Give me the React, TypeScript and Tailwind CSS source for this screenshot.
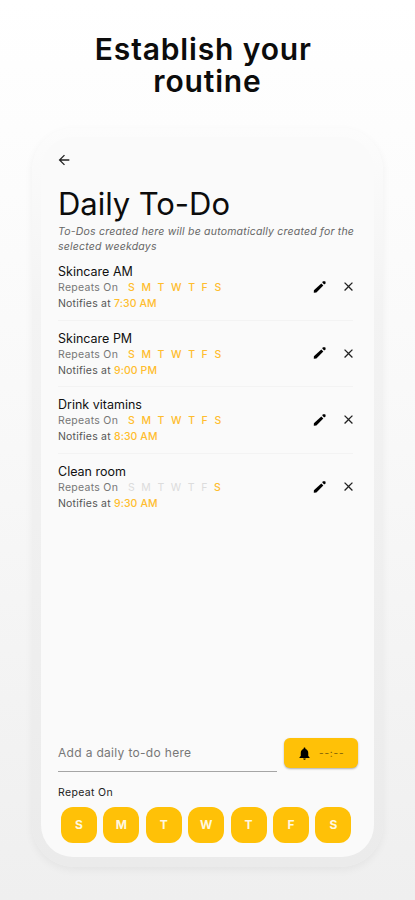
import { MdArrowBack, MdClose, MdNotifications } from 'react-icons/md';

const WEEKDAYS = ['S', 'M', 'T', 'W', 'T', 'F', 'S'];
const EVERY_DAY = [0, 1, 2, 3, 4, 5, 6];

interface Todo {
  title: string;
  time: string;
  days: number[];
}

const TODOS: Todo[] = [
  { title: 'Skincare AM', time: '7:30 AM', days: EVERY_DAY },
  { title: 'Skincare PM', time: '9:00 PM', days: EVERY_DAY },
  { title: 'Drink vitamins', time: '8:30 AM', days: EVERY_DAY },
  { title: 'Clean room', time: '9:30 AM', days: [6] },
];

function PencilIcon() {
  return (
    <svg width="14" height="14" viewBox="0 0 14 14" fill="black">
      <path d="M.8 12.8.9 10.3 8.3 3.4 10.3 5.4 3.4 12.6Z" />
      <path d="M9.2 2.6 10.5 1.3Q11 .9 11.5 1.3L12.5 2.3Q12.9 2.8 12.5 3.3L11.2 4.6Z" />
    </svg>
  );
}

function TodoRow({ todo, last }: { todo: Todo; last: boolean }) {
  return (
    <li className={`flex h-[66.6px] w-[295px] items-center border-b pt-[3px] ${last ? 'border-transparent' : 'border-[#f3f3f3]'}`}>
      <div className="flex-1">
        <h2 className="text-[12.5px] leading-4 text-[#111]">{todo.title}</h2>
        <div className="flex h-4 items-center text-[10.5px] leading-4 text-[#777]">
          <span className="w-[70px] tracking-[0.28px]">Repeats On</span>
          <div className="flex gap-[6.6px]">
            {WEEKDAYS.map((day, i) => (
              <span key={i} className={todo.days.includes(i) ? 'font-medium text-[#ffbd2e]' : 'text-[#dcdcdc]'}>
                {day}
              </span>
            ))}
          </div>
        </div>
        <p className="text-[10.5px] leading-4 tracking-[0.2px] text-[#555]">
          Notifies at <span className="font-medium tracking-[0.1px] text-[#ffbd2e]">{todo.time}</span>
        </p>
      </div>
      <div className="mb-[3px] flex items-center gap-[14px]">
        <PencilIcon />
        <MdClose size={15} className="-mr-[3px] text-[#222]" />
      </div>
    </li>
  );
}

export default function App() {
  return (
    <div className="flex h-[900px] w-[415px] flex-col items-center bg-linear-to-b from-white via-[#f8f8f8] to-[#efefef] font-['Inter',sans-serif]">
      <h1 className="h-[128px] pt-[34px] text-center text-[30px] leading-[31.5px] font-semibold tracking-[0.85px] text-[#0c0c0c]">
        Establish your&nbsp;
        <br />
        routine
      </h1>

      <div className="h-[739px] w-[351px] rounded-[42px] bg-linear-to-b from-[#fcfcfc] via-[#f3f3f3] via-25% to-[#ebebeb] p-[9px] pb-[10px] shadow-[0_3px_8px_rgba(0,0,0,0.05)]">
        <main className="flex h-full flex-col rounded-[32px] bg-[#fafafa] pl-[17px]">
          <MdArrowBack size={16} className="mt-[15px] -ml-0.5 text-[#222]" />

          <h1 className="mt-[16px] text-[31px] leading-10 tracking-[-0.05px] text-[#0c0c0c]">Daily To-Do</h1>
          <p className="mt-px w-[305px] text-[10.5px] leading-[14.5px] tracking-[0.21px] italic text-[#666]">
            To-Dos created here will be automatically created for the selected weekdays
          </p>

          <ul>
            {TODOS.map((todo, i) => (
              <TodoRow key={todo.title} todo={todo} last={i === TODOS.length - 1} />
            ))}
          </ul>

          <div className="mt-auto mb-[14px]">
            <div className="flex gap-[7px]">
              <div className="h-[34px] w-[219px] border-b border-[#a5a5a5] text-[12px] leading-[30px] tracking-[0.32px] text-[#777]">
                Add a daily to-do here
              </div>
              <button className="flex h-[30px] w-[74px] items-center rounded-[6px] bg-[#ffc107] pl-[13px] shadow-[0_1px_2px_rgba(0,0,0,0.3)]">
                <MdNotifications size={15} className="text-black" />
                <span className="ml-[7px] text-[10px] tracking-[0.8px] text-[#7d5f08]">--:--</span>
              </button>
            </div>
            <p className="mt-[13px] text-[10.5px] leading-4 tracking-[0.35px] text-[#222]">Repeat On</p>
            <div className="mt-[6px] ml-[3px] flex gap-[6.4px]">
              {WEEKDAYS.map((day, i) => (
                <button
                  key={i}
                  className="size-9 rounded-[12px] bg-[#ffc107] text-center text-[12px] font-bold text-[#fff8e1]"
                >
                  {day}
                </button>
              ))}
            </div>
          </div>
        </main>
      </div>
    </div>
  );
}
